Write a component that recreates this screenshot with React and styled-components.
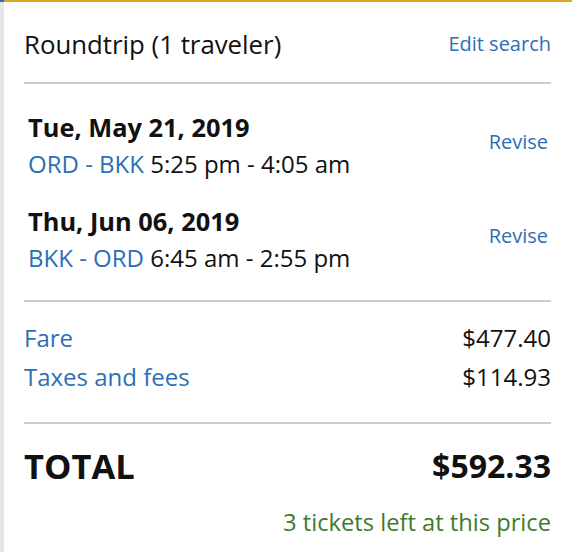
import styled, { createGlobalStyle } from 'styled-components';

const GlobalStyle = createGlobalStyle`
	html, body {
		margin: 0;
		padding: 0;
		background: #fff;
	}
	body {
		font-family: "Open Sans", "Noto Sans", sans-serif;
		color: #111;
	}
`;

const flights = [
	{ date: 'Tue, May 21, 2019', route: 'ORD - BKK', times: '5:25 pm - 4:05 am' },
	{ date: 'Thu, Jun 06, 2019', route: 'BKK - ORD', times: '6:45 am - 2:55 pm' },
];

const charges = [
	{ label: 'Fare', amount: '$477.40' },
	{ label: 'Taxes and fees', amount: '$114.93' },
];

const App = () => {
	return (
		<>
			<GlobalStyle />
			<Page>
				<SideStripe />
				<Card>
					<Header>
						<Title>Roundtrip (1 traveler)</Title>
						<LinkText size={20}>Edit search</LinkText>
					</Header>
					<Divider />
					<Flights>
						{flights.map((f) => (
							<FlightRow key={f.date}>
								<div>
									<FlightDate>{f.date}</FlightDate>
									<FlightLine>
										<Route>{f.route}</Route> {f.times}
									</FlightLine>
								</div>
								<ReviseLink size={20}>Revise</ReviseLink>
							</FlightRow>
						))}
					</Flights>
					<Divider />
					<Charges>
						{charges.map((c) => (
							<ChargeRow key={c.label}>
								<LinkText size={24}>{c.label}</LinkText>
								<span>{c.amount}</span>
							</ChargeRow>
						))}
					</Charges>
					<Divider />
					<Totals>
						<TotalRow>
							<TotalLabel>TOTAL</TotalLabel>
							<TotalAmount>$592.33</TotalAmount>
						</TotalRow>
						<Notice>3 tickets left at this price</Notice>
					</Totals>
				</Card>
			</Page>
		</>
	);
};

const Page = styled.div`
	display: flex;
	min-height: 552px;
	width: 572px;
`;

const SideStripe = styled.div`
	width: 4px;
	flex-shrink: 0;
	background: #e6e6e6;
	border-top: 2px solid #2a6ebb;
`;

const Card = styled.div`
	flex: 1;
	border-top: 2px solid #dba628;
	padding: 0 21px 0 20px;
`;

const Header = styled.div`
	display: flex;
	justify-content: space-between;
	align-items: flex-start;
	padding: 28px 0 24px;
	line-height: 28px;
`;

const Title = styled.span`
	font-size: 25.8px;
	color: #111;
`;

const LinkText = styled.span`
	font-size: ${(p) => p.size}px;
	color: #2c6fb7;
	cursor: pointer;
	line-height: 28px;
`;

const Divider = styled.div`
	height: 2px;
	background: #cccccc;
`;

const Flights = styled.div`
	display: flex;
	flex-direction: column;
	gap: 22px;
	padding: 26px 0 24px 4px;
`;

const FlightRow = styled.div`
	display: flex;
	justify-content: space-between;
	align-items: center;
`;

const FlightDate = styled.div`
	font-size: 25.4px;
	font-weight: 700;
	line-height: 35px;
`;

const FlightLine = styled.div`
	font-size: 24px;
	line-height: 37px;
`;

const Route = styled.span`
	color: #2c6fb7;
`;

const ReviseLink = styled(LinkText)`
	margin-bottom: 8px;
	margin-right: 3px;
`;

const Charges = styled.div`
	padding: 16px 0 26px;
`;

const ChargeRow = styled.div`
	display: flex;
	justify-content: space-between;
	align-items: center;
	font-size: 24px;
	line-height: 39px;
`;

const Totals = styled.div`
	display: flex;
	flex-direction: column;
	gap: 22px;
	padding-top: 22px;
`;

const TotalRow = styled.div`
	display: flex;
	justify-content: space-between;
	align-items: center;
	line-height: 40px;
	font-weight: 700;
`;

const TotalLabel = styled.span`
	font-size: 34.5px;
`;

const TotalAmount = styled.span`
	font-size: 32px;
`;

const Notice = styled.div`
	align-self: flex-end;
	font-size: 23.7px;
	line-height: 28px;
	color: #3f7a2c;
`;

export default App;
